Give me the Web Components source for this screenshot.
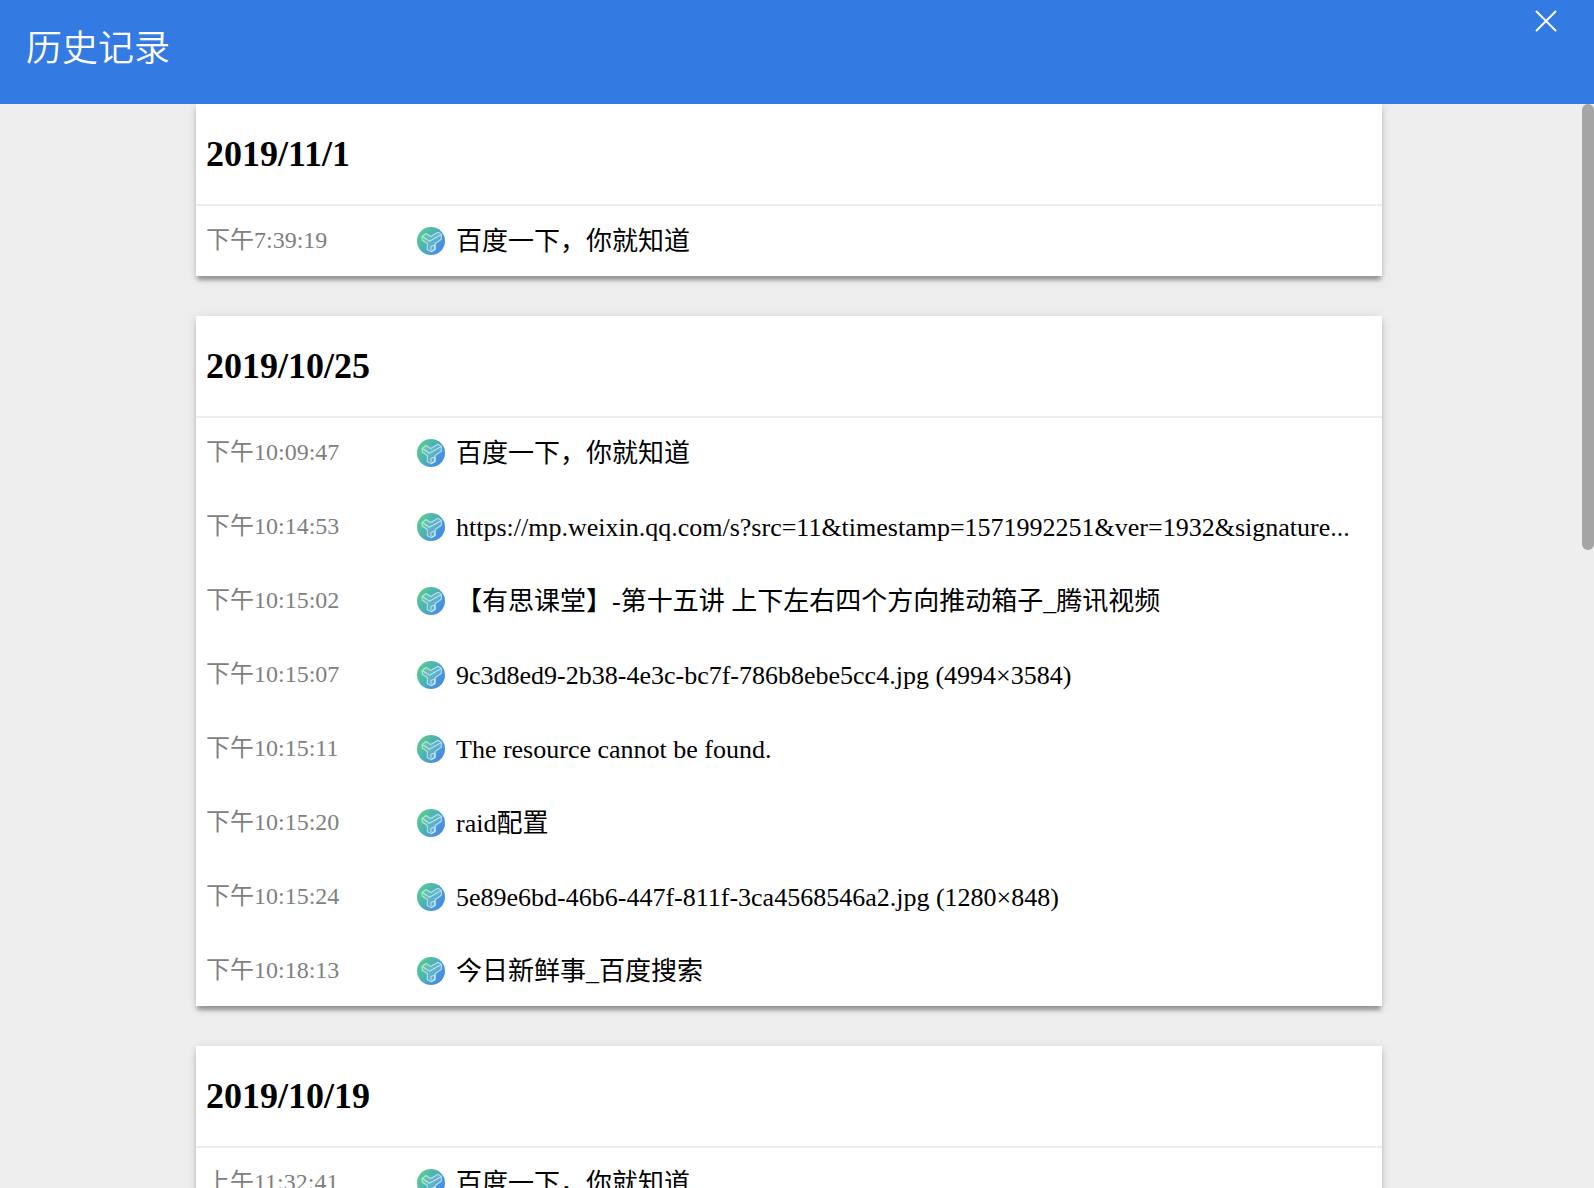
<!DOCTYPE html>
<html lang="zh-CN">
<head>
<meta charset="utf-8">
<title>历史记录</title>
<style>
html, body { margin: 0; height: 100%; }
body { overflow: hidden; background: #eee; font-family: "Liberation Serif", "Noto Sans CJK SC", serif; color: #000; }
</style>
</head>
<body>
<history-page>
  <history-header slot="header">历史记录</history-header>
  <history-day date="2019/11/1">
    <history-entry time="下午7:39:19">百度一下，你就知道</history-entry>
  </history-day>
  <history-day date="2019/10/25">
    <history-entry time="下午10:09:47">百度一下，你就知道</history-entry>
    <history-entry time="下午10:14:53">https://mp.weixin.qq.com/s?src=11&amp;timestamp=1571992251&amp;ver=1932&amp;signature...</history-entry>
    <history-entry time="下午10:15:02">【有思课堂】-第十五讲 上下左右四个方向推动箱子_腾讯视频</history-entry>
    <history-entry time="下午10:15:07">9c3d8ed9-2b38-4e3c-bc7f-786b8ebe5cc4.jpg (4994×3584)</history-entry>
    <history-entry time="下午10:15:11">The resource cannot be found.</history-entry>
    <history-entry time="下午10:15:20">raid配置</history-entry>
    <history-entry time="下午10:15:24">5e89e6bd-46b6-447f-811f-3ca4568546a2.jpg (1280×848)</history-entry>
    <history-entry time="下午10:18:13">今日新鲜事_百度搜索</history-entry>
  </history-day>
  <history-day date="2019/10/19">
    <history-entry time="上午11:32:41">百度一下，你就知道</history-entry>
  </history-day>
</history-page>
<script>
const attach = (el, html) => { el.attachShadow({ mode: "open" }).innerHTML = html; };

customElements.define("history-page", class extends HTMLElement {
  constructor() {
    super();
    attach(this, `<style>
      :host { display: flex; flex-direction: column; height: 100vh; }
      .body { flex: 1; min-height: 0; display: flex; overflow: hidden; }
      main { flex: 1; min-width: 0; padding: 0 200px 40px 196px; display: flex; flex-direction: column; gap: 40px; }
      .track { width: 12px; }
      .thumb { height: 446px; background: #a5a5a5; border-radius: 6px; }
    </style>
    <slot name="header"></slot>
    <div class="body"><main><slot></slot></main><div class="track"><div class="thumb"></div></div></div>`);
  }
});

customElements.define("history-header", class extends HTMLElement {
  constructor() {
    super();
    attach(this, `<style>
      :host { display: block; flex: none; }
      header { display: flex; justify-content: space-between; align-items: flex-start; height: 104px; padding: 0 26px; box-sizing: border-box; background: #337ae3; color: #fff; }
      h1 { margin: 0; font-size: 36px; line-height: 90px; font-weight: 350; font-family: "Noto Sans CJK SC", sans-serif; }
      button { width: 44px; height: 42px; padding: 0; border: 0; background: none; color: inherit; display: grid; place-items: center; cursor: pointer; }
    </style>
    <header><h1><slot></slot></h1>
    <button type="button" aria-label="关闭"><svg width="22" height="22" viewBox="0 0 22 22" fill="none" stroke="currentColor" stroke-width="2" stroke-linecap="round"><path d="M1.5 1.5l19 19M20.5 1.5l-19 19"/></svg></button></header>`);
  }
});

customElements.define("history-day", class extends HTMLElement {
  constructor() {
    super();
    attach(this, `<style>
      :host { display: block; flex: none; background: #fff; box-shadow: 0 6px 4px -2px rgba(0,0,0,.25), 0 4px 4px rgba(0,0,0,.1), 0 2px 10px rgba(0,0,0,.12); }
      h2 { margin: 0; padding: 0 10px; font-size: 36px; line-height: 100px; font-weight: 700; border-bottom: 2px solid #ececec; }
      .entries { display: flex; flex-direction: column; gap: 4px; }
    </style>
    <section><h2></h2><div class="entries" role="list"><slot></slot></div></section>`);
    this.shadowRoot.querySelector("h2").textContent = this.getAttribute("date");
  }
});

customElements.define("history-entry", class extends HTMLElement {
  constructor() {
    super();
    attach(this, `<style>
      :host { display: flex; align-items: center; height: 70px; padding: 0 30px 0 10px; }
      time { flex: none; width: 211px; font-size: 24px; line-height: 34px; padding-bottom: 2px; color: #808080; }
      svg { flex: none; margin-right: 11px; }
      a { min-width: 0; font-size: 26px; line-height: 38px; padding-top: 2px; color: inherit; text-decoration: none; white-space: nowrap; overflow: hidden; text-overflow: ellipsis; }
    </style>
    <time></time>
    <svg width="28" height="28" viewBox="0 0 28 28" aria-hidden="true">
      <defs><linearGradient id="g" x1="2" y1="6" x2="26" y2="22" gradientUnits="userSpaceOnUse"><stop offset="0" stop-color="#58cb8e"/><stop offset=".5" stop-color="#4baebb"/><stop offset="1" stop-color="#4686ef"/></linearGradient></defs>
      <circle cx="14" cy="14" r="14" fill="url(#g)"/>
      <g fill="#fff" fill-opacity=".12" stroke="#d5f1f5" stroke-opacity=".75" stroke-width="1.1" stroke-linejoin="round" stroke-linecap="round">
        <path d="M5 9.500l4-3 4.800 3 7-4.200 3.500 2v5l-6 4.200v6l-4 2.300-4-2v-6.300l-5-3.200z"/>
        <path d="M6 10l6.500 4.200L23.500 8M14 22.500v-3l3.500-1.500v4.500l-3 1.500" fill="none"/>
      </g>
    </svg>
    <a href="#"><slot></slot></a>`);
    this.setAttribute("role", "listitem");
    this.shadowRoot.querySelector("time").textContent = this.getAttribute("time");
  }
});
</script>
</body>
</html>
